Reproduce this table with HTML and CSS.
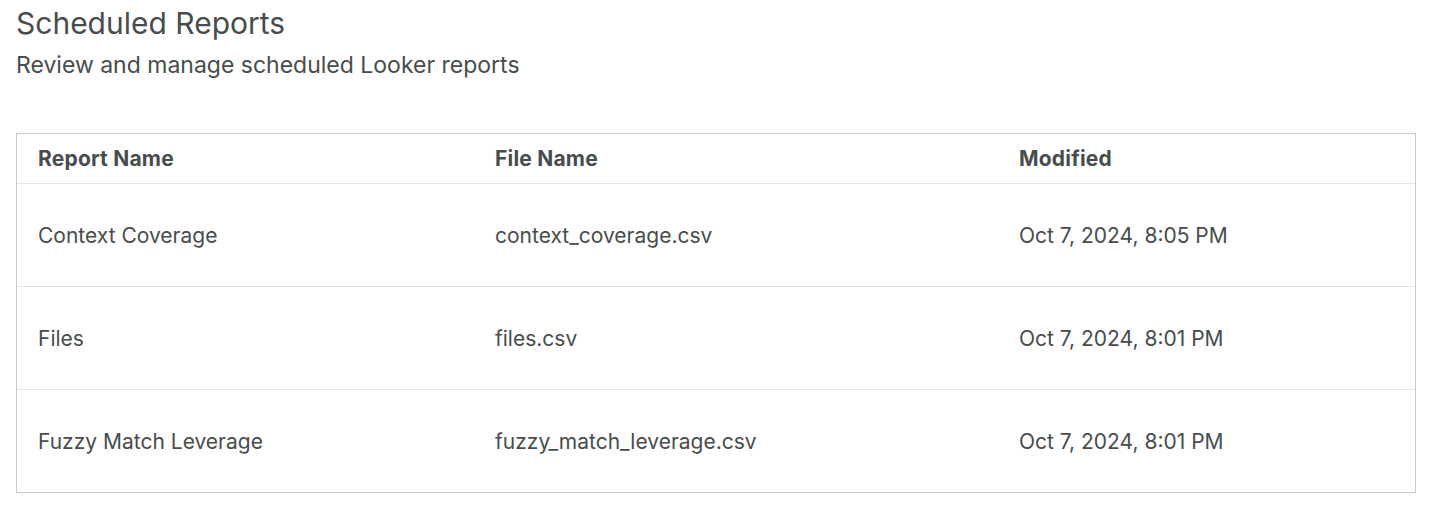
FILE: index.html
```html
<!DOCTYPE html>
<html lang="en">
<head>
<meta charset="utf-8">
<title>Scheduled Reports</title>
<link rel="stylesheet" href="styles.css">
</head>
<body>
<main class="page">
  <header class="page-head">
    <h1 class="title">Scheduled Reports</h1>
    <p class="subtitle">Review and manage scheduled Looker reports</p>
  </header>
  <div class="table-wrap">
    <table class="reports">
      <colgroup>
        <col class="c-name">
        <col class="c-file">
        <col class="c-mod">
      </colgroup>
      <thead>
        <tr><th>Report Name</th><th>File Name</th><th>Modified</th></tr>
      </thead>
      <tbody>
        <tr><td>Context Coverage</td><td>context_coverage.csv</td><td>Oct 7, 2024, 8:05 PM</td></tr>
        <tr><td>Files</td><td>files.csv</td><td>Oct 7, 2024, 8:01 PM</td></tr>
        <tr><td>Fuzzy Match Leverage</td><td>fuzzy_match_leverage.csv</td><td>Oct 7, 2024, 8:01 PM</td></tr>
      </tbody>
    </table>
  </div>
</main>
</body>
</html>
```
FILE: styles.css
```css
html, body {
  margin: 0;
  padding: 0;
  background: #ffffff;
}
body {
  font-family: "Inter", "Open Sans", sans-serif;
  color: #474d4c;
}
.page {
  padding: 5px 15px 0 16px;
}
.page-head {
  display: flex;
  flex-direction: column;
  gap: 10px;
}
.title {
  margin: 0;
  font-size: 30px;
  line-height: 36px;
  font-weight: 400;
}
.subtitle {
  margin: 0;
  font-size: 23px;
  line-height: 28px;
  font-weight: 400;
}
.table-wrap {
  margin-top: 54px;
  border: 1px solid #c9cbcb;
}
.reports {
  width: 100%;
  border-collapse: collapse;
  table-layout: fixed;
}
.c-name { width: 457px; }
.c-file { width: 524px; }
.reports th {
  text-align: left;
  font-size: 21px;
  font-weight: 700;
  letter-spacing: 0.2px;
  height: 49px;
  padding: 0 0 0 21px;
  border-bottom: 1px solid #e2e4e4;
}
.reports td {
  font-size: 21px;
  height: 102px;
  padding: 0 0 0 21px;
  border-bottom: 1px solid #e2e4e4;
}
.reports tbody tr:last-child td {
  border-bottom: none;
}
```
